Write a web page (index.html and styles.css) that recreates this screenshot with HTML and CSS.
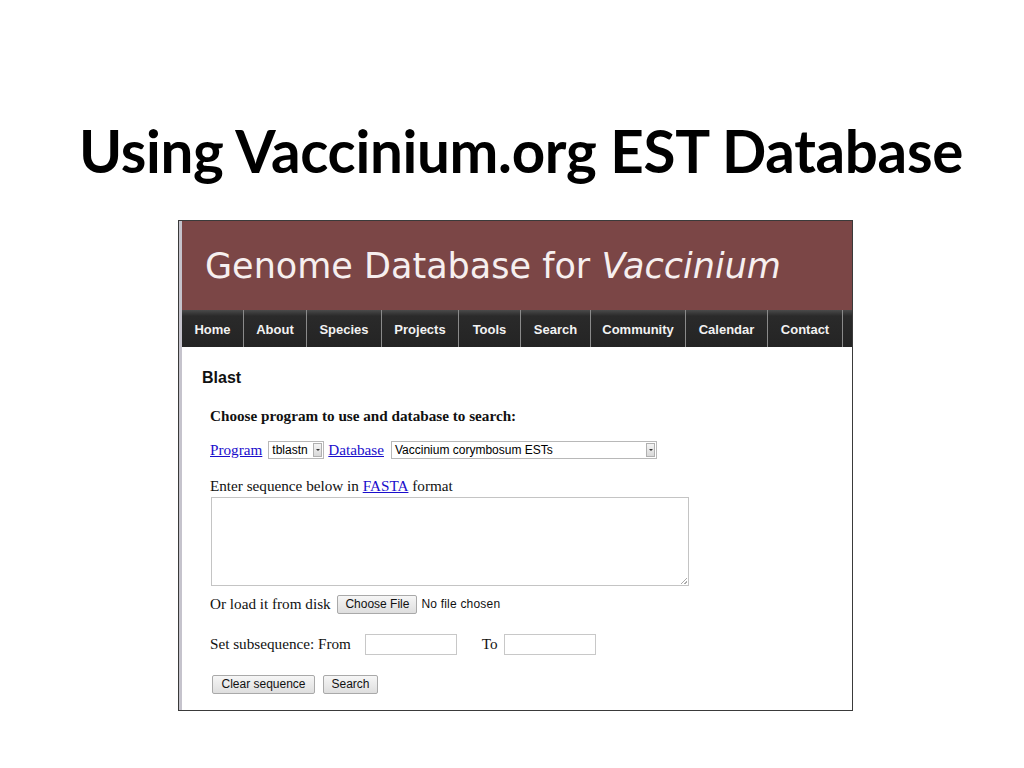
FILE: index.html
```html
<!DOCTYPE html>
<html>
<head>
<meta charset="utf-8">
<link rel="stylesheet" href="styles.css">
</head>
<body>
<div class="slide">
  <h1 class="title">Using Vaccinium.org EST Database</h1>
  <div class="shot">
    <div class="strip"></div>
    <div class="page">
      <div class="header">Genome Database for <i>Vaccinium</i></div>
      <div class="nav">
        <span class="item">Home</span><span class="item">About</span><span class="item">Species</span><span class="item">Projects</span><span class="item">Tools</span><span class="item">Search</span><span class="item">Community</span><span class="item">Calendar</span><span class="item">Contact</span>
      </div>
      <div class="content">
        <h2 class="blast">Blast</h2>
        <div class="form">
          <div class="row choose">Choose program to use and database to search:</div>
          <div class="row progrow">
            <a class="lnk">Program</a>
            <span class="select prog"><span class="val">tblastn</span><span class="arrow"></span></span>
            <a class="lnk">Database</a>
            <span class="select db"><span class="val">Vaccinium corymbosum ESTs</span><span class="arrow"></span></span>
          </div>
          <div class="row enter">Enter sequence below in <a class="lnk">FASTA</a> format</div>
          <div class="textarea"><span class="grip"></span></div>
          <div class="row">Or load it from disk <span class="btn">Choose File</span><span class="nofile">No file chosen</span></div>
          <div class="row sub">Set subsequence: From <span class="input"></span><span class="to">To</span><span class="input"></span></div>
          <div class="row btns"><span class="btn">Clear sequence</span><span class="btn">Search</span></div>
        </div>
      </div>
    </div>
  </div>
</div>
</body>
</html>
```

FILE: styles.css
```css
html, body { margin: 0; padding: 0; background: #fff; }
.slide { width: 1024px; height: 768px; position: relative; overflow: hidden; }
.title {
  margin: 0;
  padding-top: 114px;
  height: 220px;
  box-sizing: border-box;
  text-align: center;
  font-family: "Lato", "Open Sans", sans-serif;
  font-weight: 700;
  font-size: 58.3px;
  line-height: 72px;
  color: #000;
  letter-spacing: -0.3px;
  padding-left: 18px;
}
.shot {
  margin-left: 178px;
  width: 675px;
  height: 491px;
  box-sizing: border-box;
  border: 1px solid #3a3a3a;
  display: flex;
}
.strip { width: 3px; background: #c5c3cc; flex: none; }
.page { flex: 1; display: flex; flex-direction: column; min-height: 0; }
.header {
  flex: none;
  height: 89px;
  background: #7b4646;
  color: #f6efef;
  font-family: "DejaVu Sans", sans-serif;
  font-size: 35px;
  padding-left: 23px;
  line-height: 89px;
  box-sizing: border-box;
  padding-top: 1px;
}
.header i { font-style: oblique; }
.nav {
  flex: none;
  height: 37px;
  background: linear-gradient(#4a4a4a 0px, #2a2a2a 6px, #242424 100%);
  display: flex;
  font-family: "Liberation Sans", Arial, sans-serif;
  font-weight: 700;
  font-size: 13px;
  color: #f2f2f2;
}
.item {
  display: flex;
  align-items: center;
  justify-content: center;
  border-right: 1px solid #8a8a8a;
  padding: 1px 0 0 0;
  box-sizing: border-box;
}
.item:nth-child(1) { width: 62px; }
.item:nth-child(2) { width: 63px; }
.item:nth-child(3) { width: 75px; }
.item:nth-child(4) { width: 77px; }
.item:nth-child(5) { width: 62px; }
.item:nth-child(6) { width: 70px; }
.item:nth-child(7) { width: 95px; }
.item:nth-child(8) { width: 82px; }
.item:nth-child(9) { width: 75px; }
.content { flex: none; padding: 20px 0 0 20px; }
.blast {
  margin: 0;
  font-family: "Liberation Sans", Arial, sans-serif;
  font-size: 16px;
  font-weight: 700;
  line-height: 22px;
  color: #111;
}
.form {
  padding-left: 8px;
  padding-top: 17px;
  font-family: "Liberation Serif", "Times New Roman", serif;
  font-size: 15.2px;
  color: #111;
}
.row { display: flex; align-items: center; height: 20px; margin-bottom: 14px; white-space: pre; }
.choose { font-weight: 700; margin-bottom: 14px; }
.progrow { margin-bottom: 16px; }
.enter { margin-bottom: 0; }
.lnk { color: #1a0dcc; text-decoration: underline; }
.select {
  display: inline-flex;
  align-items: center;
  height: 18px;
  box-sizing: border-box;
  border: 1px solid #b8b8b8;
  background: #fff;
  font-family: "Liberation Sans", Arial, sans-serif;
  font-size: 12px;
  color: #000;
  position: relative;
}
.prog { width: 56px; margin: 0 4px 0 6px; }
.db { width: 266px; margin-left: 7px; }
.select .val { padding-left: 3px; flex: 1; }
.select .arrow {
  width: 9px; height: 14px; margin-right: 1px;
  border: 1px solid #b0b0b0;
  background: linear-gradient(#f4f4f4, #d8d8d8);
  box-sizing: border-box;
  position: relative;
}
.select .arrow::after {
  content: ""; position: absolute; left: 2px; top: 5px;
  border-left: 2px solid transparent; border-right: 2px solid transparent; border-top: 2px solid #333;
}
.textarea {
  width: 478px; height: 89px;
  border: 1px solid #c4c4c4;
  box-sizing: border-box;
  margin: 1px 0 8px 1px;
  position: relative;
}
.grip {
  position: absolute; right: 1px; bottom: 1px; width: 6px; height: 6px;
  background: linear-gradient(135deg, transparent 45%, #aaa 45%, #aaa 55%, transparent 55%, transparent 75%, #aaa 75%, #aaa 85%, transparent 85%);
}
.btn {
  display: inline-flex; align-items: center; justify-content: center;
  height: 19px; box-sizing: border-box;
  border: 1px solid #a9a9a9;
  border-radius: 2px;
  background: linear-gradient(#f6f6f6, #dedede);
  font-family: "Liberation Sans", Arial, sans-serif;
  font-size: 12px;
  color: #111;
  padding: 0 6px;
}
.row .btn { margin-left: 3px; width: 80px; }
.nofile { font-family: "Liberation Sans", Arial, sans-serif; font-size: 12px; margin-left: 4px; letter-spacing: 0.2px; }
.sub { margin-top: 20px; margin-bottom: 20px; }
.input { width: 92px; height: 21px; box-sizing: border-box; border: 1px solid #c8c8c8; margin-left: 10px; }
.to { margin-left: 25px; margin-right: -4px; }
.btns .btn:first-child { margin-left: 2px; width: 103px; }
.btns .btn:last-child { margin-left: 8px; width: 55px; }
```
